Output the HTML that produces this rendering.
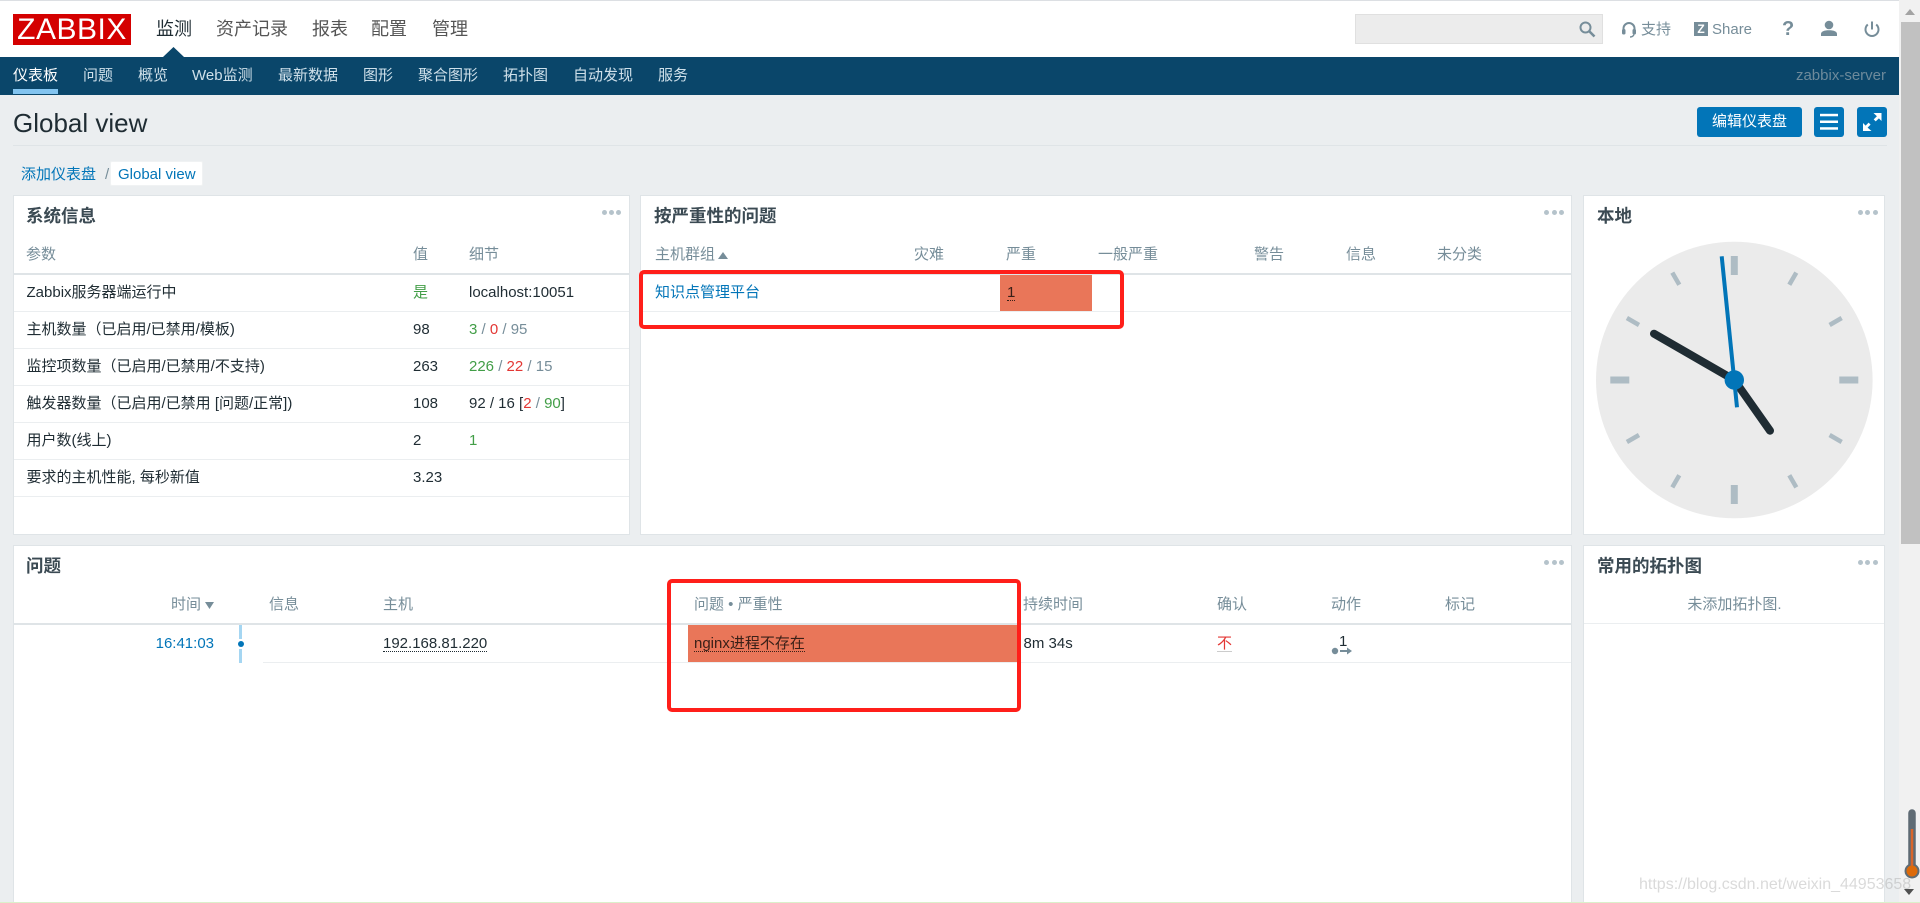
<!DOCTYPE html>
<html lang="zh"><head><meta charset="utf-8"><title>Global view</title>
<style>
html,body{margin:0;padding:0;width:1920px;height:903px;overflow:hidden;background:#ebeef0}
body{position:relative;font-family:"Liberation Sans","Noto Sans CJK SC",sans-serif;font-size:15px;color:#1f2c33}
div,span.t,a{position:absolute;white-space:nowrap}
.t{line-height:20px;height:20px}
.nav{font-size:18px;color:#555;line-height:24px;top:17px}
.sub{color:#cfe0ea;line-height:20px;top:66px}
.card{background:#fff;border:1px solid #dfe4e7;box-sizing:border-box}
.h{font-size:17.5px;font-weight:bold;color:#3b4a53;line-height:24px;top:204px}
.th{color:#768d99;line-height:20px;top:245px}
.th2{color:#768d99;line-height:20px;top:595px}
.l{background:#ebeef0;height:1px}
.b{color:#0275b8}
.g{color:#429e47}.r{color:#e33734}.y{color:#768d99}
.red{border:4px solid #ff1f1a;border-radius:5px;box-sizing:border-box;background:transparent}
.btn{background:#0275b8;border-radius:3px;top:107px;height:30px}
.dot{width:5px;height:5px;border-radius:50%;background:#b5c3cb}
</style></head><body>

<div style="left:0;top:0;width:1899px;height:57px;background:#fff"></div>
<div style="left:0;top:0;width:1899px;height:1px;background:#dcdfe3"></div>
<div style="left:13px;top:14px;width:118px;height:31px;background:#d40000;color:#fff;font-size:30px;line-height:32px;text-align:center;letter-spacing:.5px">ZABBIX</div>
<div class="nav" style="left:156px;color:#1f2c33">监测</div>
<div class="nav" style="left:216px">资产记录</div>
<div class="nav" style="left:312px">报表</div>
<div class="nav" style="left:371px">配置</div>
<div class="nav" style="left:432px">管理</div>
<svg style="position:absolute;left:163px;top:47px" width="21" height="10"><path d="M10.5 0L21 10H0Z" fill="#0a466a"/></svg>

<div style="left:1355px;top:14px;width:248px;height:30px;background:#ececec;border:1px solid #e0e0e0;box-sizing:border-box"></div>
<svg style="position:absolute;left:1578px;top:20px" width="18" height="18" viewBox="0 0 18 18" fill="none" stroke="#768d99"><circle cx="7.5" cy="7.5" r="5" stroke-width="2"/><path d="M11.5 11.5L16.5 16.5" stroke-width="2.6"/></svg>
<svg style="position:absolute;left:1621px;top:21px" width="16" height="17" viewBox="0 0 16 17" fill="none"><path d="M2.5 10V7.5a5.5 5.5 0 0 1 11 0V10" stroke="#768d99" stroke-width="2"/><rect x="1" y="8" width="3.5" height="5.5" rx="1.5" fill="#768d99"/><rect x="11.5" y="8" width="3.5" height="5.5" rx="1.5" fill="#768d99"/><path d="M13 13.5q-1 2.5-4 2.5" stroke="#768d99" stroke-width="1.4"/></svg>
<span class="t y" style="left:1641px;top:20px">支持</span>
<div style="left:1694px;top:22px;width:14px;height:14px;background:#768d99;color:#fff;font-size:12px;font-weight:bold;line-height:14px;text-align:center">Z</div>
<span class="t y" style="left:1712px;top:20px">Share</span>
<span class="t y" style="left:1782px;top:19px;font-size:20px;font-weight:bold">?</span>
<svg style="position:absolute;left:1820px;top:20px" width="18" height="18" viewBox="0 0 18 18" fill="#768d99"><circle cx="9" cy="5" r="4.300"/><path d="M1 16v-2c0-2.500 3-3.800 8-3.800s8 1.300 8 3.800v2Z"/></svg>
<svg style="position:absolute;left:1863px;top:20px" width="18" height="18" viewBox="0 0 18 18" fill="none" stroke="#768d99" stroke-width="2"><path d="M9 1.500V9.500"/><path d="M4.800 4.500a6.500 6.500 0 1 0 8.400 0"/></svg>

<div style="left:0;top:57px;width:1899px;height:38px;background:#0a466a"></div>
<div class="sub" style="left:13px;color:#fff">仪表板</div>
<div class="sub" style="left:83px">问题</div>
<div class="sub" style="left:138px">概览</div>
<div class="sub" style="left:192px">Web监测</div>
<div class="sub" style="left:278px">最新数据</div>
<div class="sub" style="left:363px">图形</div>
<div class="sub" style="left:418px">聚合图形</div>
<div class="sub" style="left:503px">拓扑图</div>
<div class="sub" style="left:573px">自动发现</div>
<div class="sub" style="left:658px">服务</div>
<div style="left:13px;top:89px;width:45px;height:5px;background:#82c4f0"></div>
<div style="right:34px;top:66px;line-height:20px;color:#6d8a9b">zabbix-server</div>

<div style="left:13px;top:107px;font-size:26px;line-height:32px;color:#1f2c33">Global view</div>
<div style="left:13px;top:145px;width:1874px;height:1px;background:#dfe4e7"></div>
<a class="t b" style="left:21px;top:165px">添加仪表盘</a>
<span class="t" style="left:105px;top:165px;color:#768d99">/</span>
<div style="left:110px;top:161px;width:93px;height:25px;background:#fff;border-radius:2px;border:1px solid #f0f2f3;box-sizing:border-box"></div>
<span class="t b" style="left:118px;top:165px">Global view</span>

<div class="btn" style="left:1697px;width:105px;color:#fff;text-align:center;line-height:30px">编辑仪表盘</div>
<div class="btn" style="left:1814px;width:30px"><svg style="position:absolute;left:0;top:0" width="30" height="30" fill="#fff"><rect x="6" y="6.800" width="18" height="2.500"/><rect x="6" y="13.500" width="18" height="2.500"/><rect x="6" y="20.200" width="18" height="2.500"/></svg></div>
<div class="btn" style="left:1857px;width:30px"><svg style="position:absolute;left:0;top:0" width="30" height="30" fill="#fff"><path d="M16.500 6h8v8l-2.600-2.600-3.200 3-2-2 3.200-3.200Z"/><path d="M14.500 24H6v-8l2.600 2.600 3-3 2 2-3 3Z"/></svg></div>

<!-- card 1 -->
<div class="card" style="left:13px;top:195px;width:617px;height:340px"></div>
<div class="h" style="left:26px">系统信息</div>
<div class="dot" style="left:602px;top:210px"></div><div class="dot" style="left:609px;top:210px"></div><div class="dot" style="left:616px;top:210px"></div>
<div class="th" style="left:26px">参数</div><div class="th" style="left:413px">值</div><div class="th" style="left:469px">细节</div>
<div style="left:14px;top:273px;width:615px;height:2px;background:#dfe4e7"></div>
<div class="l" style="left:14px;top:311px;width:615px"></div>
<div class="l" style="left:14px;top:348px;width:615px"></div>
<div class="l" style="left:14px;top:385px;width:615px"></div>
<div class="l" style="left:14px;top:422px;width:615px"></div>
<div class="l" style="left:14px;top:459px;width:615px"></div>
<div class="l" style="left:14px;top:496px;width:615px"></div>
<span class="t" style="left:26.500px;top:283px">Zabbix服务器端运行中</span><span class="t g" style="left:413px;top:283px">是</span><span class="t" style="left:469px;top:283px">localhost:10051</span>
<span class="t" style="left:26.500px;top:320px">主机数量（已启用/已禁用/模板)</span><span class="t" style="left:413px;top:320px">98</span><span class="t" style="left:469px;top:320px"><span class="g">3</span> <span class="y">/</span> <span class="r">0</span> <span class="y">/</span> <span class="y">95</span></span>
<span class="t" style="left:26.500px;top:357px">监控项数量（已启用/已禁用/不支持)</span><span class="t" style="left:413px;top:357px">263</span><span class="t" style="left:469px;top:357px"><span class="g">226</span> <span class="y">/</span> <span class="r">22</span> <span class="y">/</span> <span class="y">15</span></span>
<span class="t" style="left:26.500px;top:394px">触发器数量（已启用/已禁用 [问题/正常])</span><span class="t" style="left:413px;top:394px">108</span><span class="t" style="left:469px;top:394px">92 / 16 [<span class="r">2</span> <span class="y">/</span> <span class="g">90</span>]</span>
<span class="t" style="left:26.500px;top:431px">用户数(线上)</span><span class="t" style="left:413px;top:431px">2</span><span class="t g" style="left:469px;top:431px">1</span>
<span class="t" style="left:26.500px;top:468px">要求的主机性能, 每秒新值</span><span class="t" style="left:413px;top:468px">3.23</span>

<!-- card 2 -->
<div class="card" style="left:640px;top:195px;width:932px;height:340px"></div>
<div class="h" style="left:654px">按严重性的问题</div>
<div class="dot" style="left:1544px;top:210px"></div><div class="dot" style="left:1552px;top:210px"></div><div class="dot" style="left:1559px;top:210px"></div>
<div class="th" style="left:655px">主机群组</div>
<svg style="position:absolute;left:718px;top:252px" width="10" height="7"><path d="M5 0L10 7H0Z" fill="#768d99"/></svg>
<div class="th" style="left:914px">灾难</div><div class="th" style="left:1006px">严重</div><div class="th" style="left:1098px">一般严重</div><div class="th" style="left:1254px">警告</div><div class="th" style="left:1346px">信息</div><div class="th" style="left:1437px">未分类</div>
<div style="left:641px;top:273px;width:930px;height:2px;background:#dfe4e7"></div>
<div class="l" style="left:641px;top:311px;width:930px"></div>
<span class="t b" style="left:655px;top:283px">知识点管理平台</span>
<div style="left:1000px;top:275px;width:92px;height:36px;background:#e97659"></div>
<span class="t" style="left:1007px;top:283px;color:#3a2018;border-bottom:1px dotted #3a2018;height:17px;line-height:20px">1</span>
<div class="red" style="left:639px;top:270px;width:485px;height:59px"></div>

<!-- card 3 clock -->
<div class="card" style="left:1583px;top:195px;width:302px;height:340px"></div>
<div class="h" style="left:1597px">本地</div>
<div class="dot" style="left:1858px;top:210px"></div><div class="dot" style="left:1865px;top:210px"></div><div class="dot" style="left:1873px;top:210px"></div>
<svg style="position:absolute;left:1584px;top:230px" width="300" height="300" viewBox="1584 230 300 300">
<circle cx="1734.300" cy="380" r="138.300" fill="#ebebeb"/>
<g stroke="#aebcc4" stroke-width="7" transform="translate(1734.300 380)">
<path d="M0-124V-105M0 124V105M-124 0H-105M124 0H105"/>
</g>
<g stroke="#aebcc4" stroke-width="4.500" transform="translate(1734.300 380)">
<path d="M62-107.400L55-95.300M107.400-62L95.300-55M107.400 62L95.300 55M62 107.400L55 95.300M-62 107.400L-55 95.300M-107.400 62L-95.300 55M-107.400-62L-95.300-55M-62-107.400L-55-95.300"/>
</g>
<path d="M1734.300 380L1770 430.700M1734.300 380L1654 333.700" stroke="#1f2c33" stroke-width="8" stroke-linecap="round" fill="none"/>
<path d="M1721.700 256.300L1737 407.300" stroke="#0275b8" stroke-width="4"/>
<circle cx="1734.300" cy="380" r="9.700" fill="#0275b8"/>
</svg>

<!-- card 4 -->
<div class="card" style="left:13px;top:545px;width:1559px;height:357px;border-bottom:0"></div>
<div class="h" style="left:26px;top:554px">问题</div>
<div class="dot" style="left:1544px;top:560px"></div><div class="dot" style="left:1552px;top:560px"></div><div class="dot" style="left:1559px;top:560px"></div>
<div class="th2" style="left:171px">时间</div>
<svg style="position:absolute;left:205px;top:602px" width="9" height="7"><path d="M0 0H9L4.500 7Z" fill="#768d99"/></svg>
<div class="th2" style="left:269px">信息</div><div class="th2" style="left:383px">主机</div><div class="th2" style="left:694px">问题 • 严重性</div><div class="th2" style="left:1023px">持续时间</div><div class="th2" style="left:1217px">确认</div><div class="th2" style="left:1331px">动作</div><div class="th2" style="left:1445px">标记</div>
<div style="left:14px;top:623px;width:1557px;height:2px;background:#dfe4e7"></div>
<div class="l" style="left:263px;top:662px;width:1308px"></div>
<span class="t b" style="right:1706px;top:634px">16:41:03</span>
<div style="left:239px;top:625px;width:3px;height:14px;background:#a5d6f2"></div>
<div style="left:239px;top:649px;width:3px;height:14px;background:#a5d6f2"></div>
<div style="left:237.500px;top:641px;width:6px;height:6px;border-radius:50%;background:#0275b8"></div>
<span class="t" style="left:383px;top:634px;border-bottom:1px dotted #1f2c33;height:17px;line-height:20px">192.168.81.220</span>
<div style="left:688px;top:625px;width:329px;height:37px;background:#e97659"></div>
<span class="t" style="left:694px;top:634px;color:#3a2018;border-bottom:1px dotted #3a2018;height:17px;line-height:20px">nginx进程不存在</span>
<span class="t" style="left:1023.500px;top:634px">8m 34s</span>
<span class="t r" style="left:1217px;top:634px;border-bottom:1px solid #ccc;height:17px">不</span>
<span class="t" style="left:1339px;top:632px">1</span>
<svg style="position:absolute;left:1331px;top:646px" width="22" height="10" fill="#768d99"><circle cx="4" cy="5" r="3.200"/><rect x="9" y="4" width="8" height="2"/><path d="M16 1.500L21 5L16 8.500Z"/></svg>
<div class="red" style="left:667px;top:579px;width:354px;height:133px"></div>

<!-- card 5 -->
<div class="card" style="left:1583px;top:545px;width:302px;height:357px;border-bottom:0"></div>
<div class="h" style="left:1597px;top:554px">常用的拓扑图</div>
<div class="dot" style="left:1858px;top:560px"></div><div class="dot" style="left:1865px;top:560px"></div><div class="dot" style="left:1873px;top:560px"></div>
<div class="th2" style="left:1584px;width:301px;text-align:center">未添加拓扑图.</div>
<div class="l" style="left:1584px;top:623px;width:300px"></div>

<!-- scrollbar -->
<div style="left:1899px;top:0;width:21px;height:903px;background:#f1f1f1"></div>
<svg style="position:absolute;left:1905px;top:9px" width="10" height="6"><path d="M5 0L10 6H0Z" fill="#a3a3a3"/></svg>
<div style="left:1901px;top:22px;width:19px;height:522px;background:#c1c1c1"></div>
<svg style="position:absolute;left:1904px;top:889px" width="10" height="6"><path d="M0 0H10L5 6Z" fill="#505050"/></svg>

<!-- thermometer -->
<svg style="position:absolute;left:1900px;top:805px" width="20" height="80" viewBox="1900 805 20 80">
<path d="M1912 813V871" stroke="#5f6b74" stroke-width="7.500" stroke-linecap="round"/>
<circle cx="1912" cy="871" r="7.500" fill="#5f6b74"/>
<path d="M1912 829V868" stroke="#d9652a" stroke-width="2.500"/>
<circle cx="1912" cy="871" r="5.500" fill="#dd6a0a"/>
</svg>

<div style="left:1639px;top:875px;font-size:16px;line-height:20px;color:rgba(150,150,150,.35)">https://blog.csdn.net/weixin_44953658</div>
<div style="left:0;top:902px;width:1920px;height:1px;background:#dbf0cb"></div>
</body></html>
